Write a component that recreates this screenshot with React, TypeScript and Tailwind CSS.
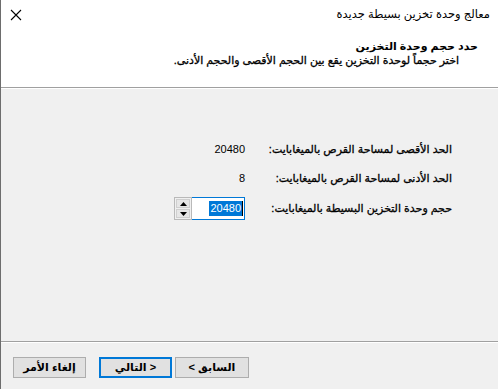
const arabic = { fontFamily: "'Liberation Sans', 'DejaVu Sans', sans-serif" };

function Spinner() {
  return (
    <div className="flex h-[23px] w-[18px] flex-col gap-px border border-[#b9b9b9] bg-[#f0f0f0] p-px">
      <div className="flex flex-1 items-center justify-center border border-[#cfcfcf] bg-[#e6e6e6]">
        <svg width="7" height="4" viewBox="0 0 7 4">
          <path d="M0 4 L3.5 0 L7 4 Z" fill="#000" />
        </svg>
      </div>
      <div className="flex flex-1 items-center justify-center border border-[#cfcfcf] bg-[#e6e6e6]">
        <svg width="7" height="4" viewBox="0 0 7 4">
          <path d="M0 0 L3.5 4 L7 0 Z" fill="#000" />
        </svg>
      </div>
    </div>
  );
}

function Row({ label, children }: { label: string; children: React.ReactNode }) {
  return (
    <div className="grid grid-cols-[207px_auto] items-center">
      <div className="whitespace-nowrap text-[11px] text-black [-webkit-text-stroke:0.3px_#000]">{label}</div>
      <div>{children}</div>
    </div>
  );
}

export default function App() {
  return (
    <div
      dir="rtl"
      style={arabic}
      className="flex h-[389px] w-[498px] flex-col overflow-hidden border-l border-[#6d6d6d] bg-[#f0f0f0] text-black"
    >
      {/* header */}
      <div className="flex h-[87px] flex-col bg-white">
        <div className="flex items-center justify-between pl-[9px] pr-[8px] pt-[6px]">
          <div className="text-[11.5px] leading-[16px]">معالج وحدة تخزين بسيطة جديدة</div>
          <svg width="12" height="12" viewBox="0 0 12 12" className="mt-[1px]">
            <path d="M1 1 L11 11 M11 1 L1 11" stroke="#000" strokeWidth="1.1" />
          </svg>
        </div>
        <div className="mt-[17px] pr-[20px] text-[11px] font-bold leading-[14px]">حدد حجم وحدة التخزين</div>
        <div className="pr-[39px] text-[11px] leading-[14px] text-black [-webkit-text-stroke:0.3px_#000]">
          اختر حجماً لوحدة التخزين يقع بين الحجم الأقصى والحجم الأدنى.
        </div>
      </div>
      <div className="h-px bg-[#a0a0a0]" />
      <div className="h-px bg-white" />

      {/* body */}
      <div className="flex flex-1 flex-col pr-[46px] pt-[52px]">
        <Row label="الحد الأقصى لمساحة القرص بالميغابايت:">
          <div className="text-[11px] leading-[16px]">20480</div>
        </Row>
        <div className="h-[12px]" />
        <Row label="الحد الأدنى لمساحة القرص بالميغابايت:">
          <div className="text-[11px] leading-[16px]">8</div>
        </Row>
        <div className="h-[11px]" />
        <Row label="حجم وحدة التخزين البسيطة بالميغابايت:">
          <div dir="ltr" className="flex h-[23px] w-[71px]">
            <Spinner />
            <div className="flex flex-1 items-center justify-end border-y border-r border-[#0078d7] bg-white pr-px">
              <span className="bg-[#0078d7] px-px text-[11px] leading-[15px] text-white">20480</span>
              <span className="h-[15px] w-px bg-black" />
            </div>
          </div>
        </Row>
      </div>

      <div className="h-px bg-[#a0a0a0]" />
      <div className="h-px bg-white" />

      {/* footer */}
      <div dir="ltr" className="flex h-[46px] items-start gap-[3px] pl-[12px] pt-[14px]">
        <button className="h-[21px] w-[73px] border border-[#adadad] bg-[#e1e1e1] text-[11px] font-bold">
          إلغاء الأمر
        </button>
        <button className="ml-[10px] h-[21px] w-[73px] border-2 border-[#0078d7] bg-[#e1e1e1] text-[11px] font-bold">
          التالي &gt;
        </button>
        <button className="h-[21px] w-[74px] border border-[#adadad] bg-[#e1e1e1] text-[11px] font-bold">
          &lt; السابق
        </button>
      </div>
    </div>
  );
}
